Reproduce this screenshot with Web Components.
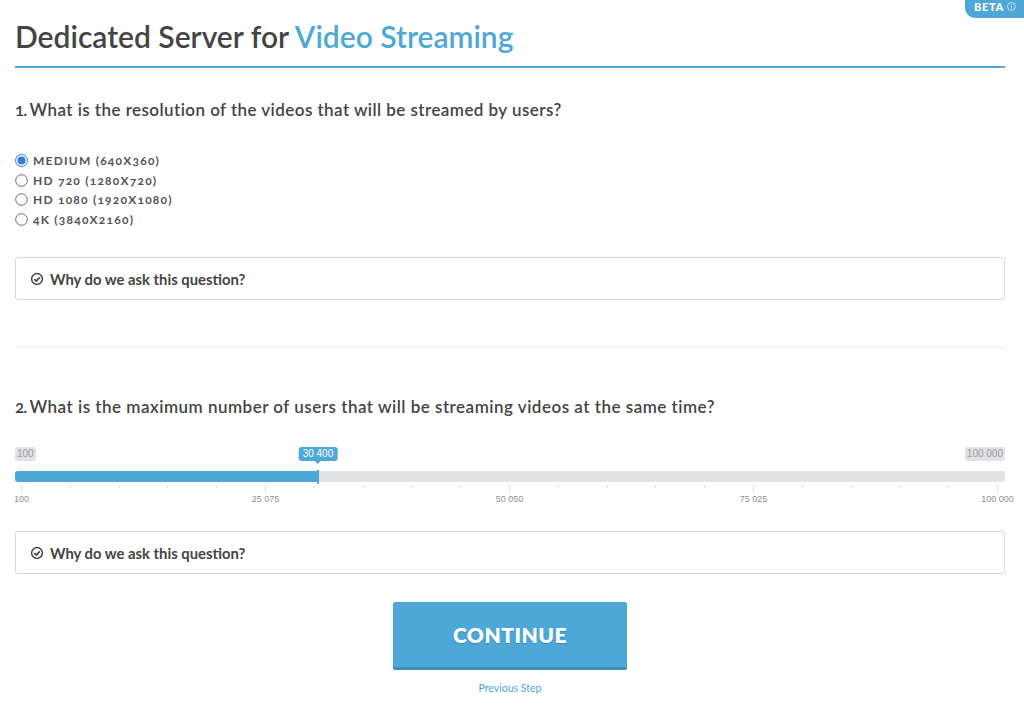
<!DOCTYPE html>
<html>
<head>
<meta charset="utf-8">
<title>Dedicated Server for Video Streaming</title>
<style>
html, body { margin: 0; background: #fff; }
body { font-family: "Lato", "Liberation Sans", sans-serif; color: #444; }
.num { letter-spacing: -1px; }
</style>
</head>
<body>
<wizard-page>
  <beta-badge></beta-badge>
  <page-title>Dedicated Server for <em>Video Streaming</em></page-title>
  <question-title style="margin-top:32px;letter-spacing:.44px"><span class="num">1. </span>What is the resolution of the videos that will be streamed by users?</question-title>
  <radio-group style="margin-top:31px">
    <radio-option checked>MEDIUM (640X360)</radio-option>
    <radio-option>HD 720 (1280X720)</radio-option>
    <radio-option>HD 1080 (1920X1080)</radio-option>
    <radio-option>4K (3840X2160)</radio-option>
  </radio-group>
  <why-panel style="margin-top:28px"></why-panel>
  <section-rule></section-rule>
  <question-title style="margin-top:49px;letter-spacing:.5px"><span class="num">2. </span>What is the maximum number of users that will be streaming videos at the same time?</question-title>
  <range-slider style="margin-top:30px" min="100" max="100 000" value="30 400" percent="30.6"></range-slider>
  <why-panel style="margin-top:26px"></why-panel>
  <continue-button style="margin-top:28px"></continue-button>
</wizard-page>

<script>
class WizardPage extends HTMLElement {
    constructor(){
        super();
        this.attachShadow({mode: 'open'}).innerHTML = `
        <style>
        :host { display: block; position: relative; width: 1024px; height: 725px; box-sizing: border-box; padding: 0 19px 0 15px; overflow: hidden; }
        </style>
        <slot></slot>`;
    }
}

class BetaBadge extends HTMLElement {
    constructor(){
        super();
        this.attachShadow({mode: 'open'}).innerHTML = `
        <style>
        :host { position: absolute; top: 0; right: 0; display: flex; align-items: center; gap: 3px; width: 59px; height: 18px; box-sizing: border-box; padding: 0 0 5px 9px; background: #4da8d8; border-radius: 0 0 0 10px; color: #fff; font: 900 11px "Lato", sans-serif; letter-spacing: .7px; }
        svg { width: 9px; height: 9px; opacity: .75; }
        </style>
        BETA
        <svg viewBox="0 0 10 10" fill="none" stroke="#fff"><circle cx="5" cy="5" r="4.4"/><path d="M5 4.4v3M5 2.4v1"/></svg>`;
    }
}

class PageTitle extends HTMLElement {
    constructor(){
        super();
        this.attachShadow({mode: 'open'}).innerHTML = `
        <style>
        :host { display: block; height: 68px; box-sizing: border-box; padding-top: 16px; border-bottom: 2px solid #4da8d8; font: 600 30px/40px "Lato", sans-serif; color: #444; white-space: nowrap; }
        ::slotted(em) { font-style: normal; color: #4da8d8; }
        </style>
        <slot></slot>`;
    }
}

class QuestionTitle extends HTMLElement {
    constructor(){
        super();
        this.attachShadow({mode: 'open'}).innerHTML = `
        <style>
        :host { display: block; font: 600 17px/20px "Lato", sans-serif; color: #444; letter-spacing: .3px; white-space: nowrap; font-feature-settings: "onum"; }
        </style>
        <slot></slot>`;
    }
}

class RadioGroup extends HTMLElement {
    constructor(){
        super();
        this.attachShadow({mode: 'open'}).innerHTML = `
        <style>
        :host { display: flex; flex-direction: column; }
        </style>
        <slot></slot>`;
    }
}

class RadioOption extends HTMLElement {
    constructor(){
        super();
        const dot = this.hasAttribute('checked')
            ? '<circle cx="6.5" cy="6.5" r="6" fill="#fff" stroke="#2f7de1"/><circle cx="6.5" cy="6.5" r="4" fill="#2f7de1"/>'
            : '<circle cx="6.5" cy="6.5" r="5.8" fill="#fff" stroke="#6b6b6b"/>';
        this.attachShadow({mode: 'open'}).innerHTML = `
        <style>
        :host { display: flex; align-items: center; gap: 5px; height: 19.6px; font: 700 12px "Lato", sans-serif; color: #555; letter-spacing: 1.22px; white-space: nowrap; font-feature-settings: "onum"; }
        svg { width: 13px; height: 13px; flex: none; }
        </style>
        <svg viewBox="0 0 13 13">${dot}</svg>
        <slot></slot>`;
    }
}

class WhyPanel extends HTMLElement {
    constructor(){
        super();
        this.attachShadow({mode: 'open'}).innerHTML = `
        <style>
        :host { display: flex; align-items: center; gap: 6px; height: 43px; box-sizing: border-box; padding: 0 0 0 14px; border: 1px solid #d8d8d8; border-radius: 3px; font: 700 14.8px "Lato", sans-serif; color: #444; white-space: nowrap; }
        svg { width: 14px; height: 14px; flex: none; }
        </style>
        <svg viewBox="0 0 14 14" fill="none" stroke="#444"><circle cx="7" cy="7" r="5.4" stroke-width="1.5"/><path d="M4.3 7.1l2 2 3.5-3.7" stroke-width="1.7"/></svg>
        Why do we ask this question?`;
    }
}

class SectionRule extends HTMLElement {
    constructor(){
        super();
        this.attachShadow({mode: 'open'}).innerHTML = `
        <style>
        :host { display: block; height: 1px; margin-top: 47px; background: #ebebeb; }
        </style>`;
    }
}

class RangeSlider extends HTMLElement {
    constructor(){
        super();
        const ticks = Array.from({length: 21}, (_, i) => `<i class="${i % 5 ? '' : 'major'}"></i>`).join('');
        const labels = ['100', '25 075', '50 050', '75 025', '100 000'].map(t => `<span>${t}</span>`).join('');
        this.attachShadow({mode: 'open'}).innerHTML = `
        <style>
        :host { display: block; font: 9px "Liberation Sans", sans-serif; color: #999; }
        .ends { display: flex; justify-content: space-between; height: 14px; position: relative; }
        .end { background: #e1e2e6; border-radius: 3px; padding: 0 2px; font-size: 10px; line-height: 14px; color: #999; }
        .track { position: relative; height: 11px; margin-top: 10px; background: #e1e2e6; border-radius: 3px; }
        .fill { height: 100%; background: #4da8d8; border-radius: 3px 0 0 3px; }
        .handle { position: absolute; top: -1px; width: 2px; height: 14px; margin-left: -1px; background: #4da8d8; }
        .bubble { position: absolute; top: 0; transform: translateX(-50%); height: 14px; padding: 0 4px; background: #4da8d8; border-radius: 3px; color: #fff; font-size: 10px; line-height: 14px; white-space: nowrap; }
        .bubble::after { content: ""; position: absolute; left: 50%; bottom: -3px; margin-left: -3px; border: 3px solid transparent; border-bottom: 0; border-top-color: #4da8d8; }
        .ticks { display: flex; justify-content: space-between; height: 8px; margin: 3px 7px 0 6px; }
        .ticks i { width: 1px; height: 3px; background: #ddd; }
        .ticks i.major { height: 7px; }
        .labels { display: flex; justify-content: space-between; margin: 0 7px 0 6px; line-height: 12px; color: #8f8f8f; }
        .labels span { width: 1px; display: flex; justify-content: center; white-space: nowrap; }
        </style>
        <div class="ends">
          <span class="end">${this.getAttribute('min')}</span>
          <span class="bubble" style="left:${this.getAttribute('percent')}%">${this.getAttribute('value')}</span>
          <span class="end">${this.getAttribute('max')}</span>
        </div>
        <div class="track">
          <div class="fill" style="width:${this.getAttribute('percent')}%"></div>
          <div class="handle" style="left:${this.getAttribute('percent')}%"></div>
        </div>
        <div class="ticks">${ticks}</div>
        <div class="labels">${labels}</div>`;
    }
}

class ContinueButton extends HTMLElement {
    constructor(){
        super();
        this.attachShadow({mode: 'open'}).innerHTML = `
        <style>
        :host { display: flex; flex-direction: column; align-items: center; gap: 12px; }
        .btn { display: flex; align-items: center; justify-content: center; width: 234px; height: 68px; box-sizing: border-box; background: #4da8d8; border-bottom: 3px solid #3f8fba; border-radius: 2px; color: #fff; font: 800 21px "Lato", sans-serif; letter-spacing: .5px; text-shadow: 0 1px 1px rgba(0,0,0,.2); }
        a { font: 10.5px "Lato", sans-serif; color: #4da8d8; }
        </style>
        <div class="btn">CONTINUE</div>
        <a>Previous Step</a>`;
    }
}

customElements.define('wizard-page', WizardPage);
customElements.define('beta-badge', BetaBadge);
customElements.define('page-title', PageTitle);
customElements.define('question-title', QuestionTitle);
customElements.define('radio-group', RadioGroup);
customElements.define('radio-option', RadioOption);
customElements.define('why-panel', WhyPanel);
customElements.define('section-rule', SectionRule);
customElements.define('range-slider', RangeSlider);
customElements.define('continue-button', ContinueButton);
</script>
</body>
</html>
